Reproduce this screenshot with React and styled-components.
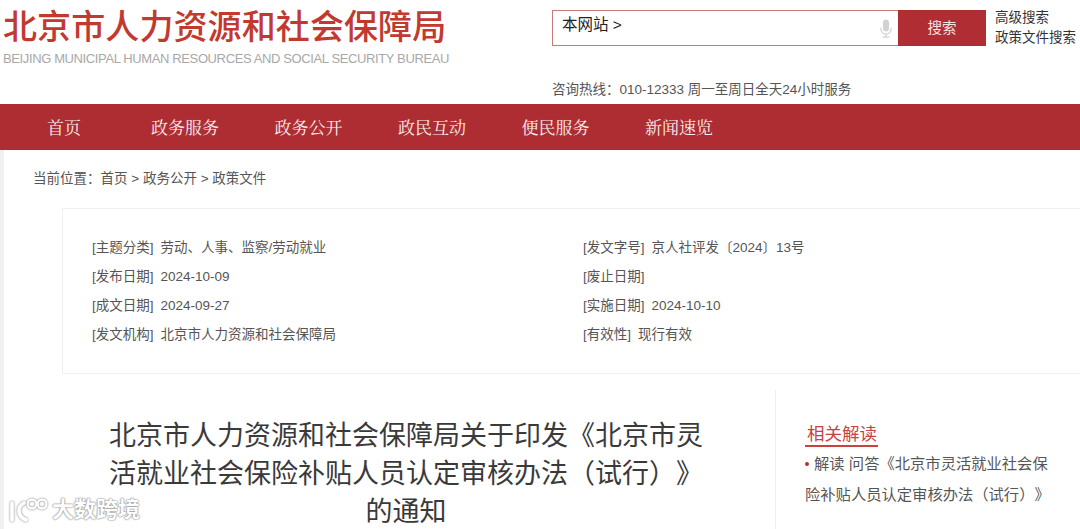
import styled, { createGlobalStyle } from "styled-components";

const GlobalStyle = createGlobalStyle`
  html, body {
    margin: 0;
    padding: 0;
    background: #fff;
    overflow: hidden;
  }
  body {
    font-family: "Liberation Sans", "Noto Sans CJK SC", sans-serif;
    text-spacing-trim: space-all;
  }
`;

const Page = styled.div`
  position: relative;
  width: 1080px;
  height: 529px;
  overflow: hidden;
`;

const Header = styled.header`
  display: flex;
  height: 104px;
  padding-left: 3px;
  box-sizing: border-box;
`;

const Brand = styled.div`
  width: 549px;
  flex: none;
  padding-top: 8px;
`;

const BrandName = styled.div`
  font-size: 34px;
  line-height: 38px;
  font-weight: 500;
  letter-spacing: 0.1px;
  color: #c1392f;
  white-space: nowrap;
`;

const BrandEnglish = styled.div`
  margin-top: 5px;
  font-size: 13px;
  line-height: 16px;
  letter-spacing: -0.38px;
  color: #a8a8a8;
  white-space: nowrap;
`;

const Tools = styled.div`
  display: flex;
  flex-direction: column;
  padding-top: 10px;
`;

const SearchRow = styled.div`
  display: flex;
`;

const SearchBox = styled.div`
  display: flex;
  width: 434px;
  height: 36px;
  box-sizing: border-box;
  border: 1px solid #c9787c;
`;

const SearchField = styled.div`
  flex: 1;
  display: flex;
  justify-content: space-between;
  padding: 4px 6px 0 9px;
  font-size: 15.5px;
  line-height: 19px;
  color: #222;
`;

const Mic = styled.svg`
  width: 12px;
  height: 20px;
  margin-top: 4px;
`;

const SearchButton = styled.div`
  width: 88px;
  margin: -1px -1px -1px 0;
  background: #af2d33;
  color: #f6e3e3;
  font-size: 14.5px;
  line-height: 36px;
  text-align: center;
`;

const SearchLinks = styled.div`
  margin: -2px 0 0 9px;
  font-size: 13.5px;
  line-height: 20px;
  color: #333;
  white-space: nowrap;
`;

const Hotline = styled.div`
  margin-top: 34px;
  font-size: 13.5px;
  line-height: 16px;
  color: #555;
  white-space: nowrap;
`;

const Nav = styled.nav`
  display: flex;
  height: 46px;
  padding-left: 47px;
  background: #ad2d33;
`;

const NavItem = styled.div`
  margin-right: ${(props) => (props.$first ? "70px" : "55.5px")};
  font-family: "Noto Serif CJK SC", "Liberation Serif", "Noto Sans CJK SC", serif;
  font-size: 17px;
  line-height: 46px;
  color: #fbeeee;
  white-space: nowrap;
`;

const Body = styled.main`
  height: 379px;
  border-left: 4px solid #f0f0f0;
  box-sizing: border-box;
`;

const Breadcrumb = styled.div`
  padding: 20px 0 0 29px;
  font-size: 13.5px;
  line-height: 17px;
  color: #555;
`;

const MetaCard = styled.section`
  display: grid;
  grid-template-columns: 491px 1fr;
  grid-auto-rows: 29px;
  align-items: center;
  width: 1030px;
  height: 166px;
  margin: 21px 0 0 58px;
  padding: 22px 0 0 29px;
  box-sizing: border-box;
  border: 1px solid #f0f0f0;
  border-right: 0;
`;

const MetaItem = styled.div`
  font-size: 13.5px;
  color: #555;
  white-space: nowrap;
`;

const MetaLabel = styled.span`
  margin-right: 7px;
`;

const Article = styled.div`
  display: flex;
  margin-top: 16px;
`;

const TitleColumn = styled.div`
  width: 771px;
  flex: none;
  padding-top: 27px;
  box-sizing: border-box;
`;

const Title = styled.h1`
  width: 600px;
  margin: 0 0 0 102px;
  font-size: 27px;
  line-height: 38px;
  font-weight: 400;
  color: #3a3a3a;
  text-align: center;
`;

const Sidebar = styled.aside`
  flex: 1;
  height: 140px;
  padding: 33px 0 0 29px;
  border-left: 1px solid #eeeeee;
`;

const SideHeading = styled.div`
  display: inline-block;
  padding: 0 1px 0 2px;
  border-bottom: 2px solid #c8423f;
  font-size: 17.5px;
  line-height: 22px;
  color: #c8423f;
`;

const SideList = styled.ul`
  width: 255px;
  margin: 1px 0 0;
  padding: 0;
  list-style: none;
  font-size: 15.3px;
  line-height: 31px;
  color: #555;
`;

const Bullet = styled.span`
  display: inline-block;
  width: 4px;
  height: 4px;
  margin-right: 5px;
  border-radius: 50%;
  background: #b5332f;
  vertical-align: 3px;
`;

const Watermark = styled.div`
  position: absolute;
  left: 9px;
  bottom: 6px;
  display: flex;
  align-items: center;
  gap: 3px;
  color: #fff;
  font-size: 22px;
  font-weight: 700;
  line-height: 24px;
  text-shadow: 0 0 2px #777, 0 0 1px #777;
`;

const WatermarkLogo = styled.svg`
  width: 40px;
  height: 26px;
  filter: drop-shadow(0 0 1px #777);
`;

const navItems = ["政务服务", "政务公开", "政民互动", "便民服务", "新闻速览"];

const metaRows = [
  ["[主题分类]", "劳动、人事、监察/劳动就业"],
  ["[发文字号]", "京人社评发〔2024〕13号"],
  ["[发布日期]", "2024-10-09"],
  ["[废止日期]", ""],
  ["[成文日期]", "2024-09-27"],
  ["[实施日期]", "2024-10-10"],
  ["[发文机构]", "北京市人力资源和社会保障局"],
  ["[有效性]", "现行有效"],
];

export default function App() {
  return (
    <Page>
      <GlobalStyle />
      <Header>
        <Brand>
          <BrandName>北京市人力资源和社会保障局</BrandName>
          <BrandEnglish>BEIJING MUNICIPAL HUMAN RESOURCES AND SOCIAL SECURITY BUREAU</BrandEnglish>
        </Brand>
        <Tools>
          <SearchRow>
            <SearchBox>
              <SearchField>
                <span>本网站 &gt;</span>
                <Mic viewBox="0 0 14 22">
                  <rect x="3.5" y="0" width="7" height="14" rx="3.5" fill="#d2d2d2" />
                  <path d="M1 9.5v1.5a6 6 0 0 0 12 0V9.5" fill="none" stroke="#d2d2d2" strokeWidth="1.4" />
                  <path d="M7 17v3M3 20.5h8" fill="none" stroke="#d2d2d2" strokeWidth="1.6" />
                </Mic>
              </SearchField>
              <SearchButton>搜索</SearchButton>
            </SearchBox>
            <SearchLinks>
              高级搜索
              <br />
              政策文件搜索
            </SearchLinks>
          </SearchRow>
          <Hotline>咨询热线：010-12333 周一至周日全天24小时服务</Hotline>
        </Tools>
      </Header>
      <Nav>
        <NavItem $first>首页</NavItem>
        {navItems.map((item) => (
          <NavItem key={item}>{item}</NavItem>
        ))}
      </Nav>
      <Body>
        <Breadcrumb>当前位置：首页 &gt; 政务公开 &gt; 政策文件</Breadcrumb>
        <MetaCard>
          {metaRows.map(([label, value]) => (
            <MetaItem key={label}>
              <MetaLabel>{label}</MetaLabel>
              {value}
            </MetaItem>
          ))}
        </MetaCard>
        <Article>
          <TitleColumn>
            <Title>北京市人力资源和社会保障局关于印发《北京市灵活就业社会保险补贴人员认定审核办法（试行）》的通知</Title>
          </TitleColumn>
          <Sidebar>
            <SideHeading>相关解读</SideHeading>
            <SideList>
              <li>
                <Bullet />
                解读 问答《北京市灵活就业社会保险补贴人员认定审核办法（试行）》
              </li>
            </SideList>
          </Sidebar>
        </Article>
      </Body>
      <Watermark>
        <WatermarkLogo viewBox="0 0 40 26">
          <path d="M3 6v17" fill="none" stroke="#fff" strokeWidth="3.6" strokeLinecap="round" />
          <path d="M15 6C8 10 8 19 17 23" fill="none" stroke="#fff" strokeWidth="3.6" strokeLinecap="round" />
          <circle cx="23" cy="7" r="4.4" fill="none" stroke="#fff" strokeWidth="2.2" />
          <circle cx="33" cy="7" r="4.4" fill="none" stroke="#fff" strokeWidth="2.2" />
        </WatermarkLogo>
        <span>大数跨境</span>
      </Watermark>
    </Page>
  );
}
